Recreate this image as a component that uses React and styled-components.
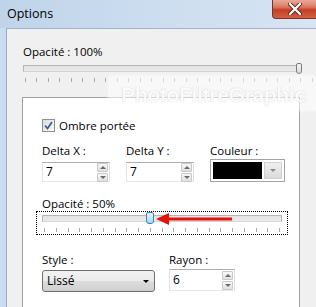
import React from 'react';
import styled, { createGlobalStyle } from 'styled-components';

const GlobalStyle = createGlobalStyle`
  html, body {
    margin: 0;
    padding: 0;
  }
  body {
    font-family: "Open Sans", "Noto Sans", "Liberation Sans", sans-serif;
    font-size: 11.5px;
    color: #000;
  }
`;

// Window chrome
const Window = styled.div`
  position: relative;
  width: 316px;
  height: 307px;
  overflow: hidden;
  display: flex;
  flex-direction: column;
  background: #cadcef;
`;

const TitleBar = styled.div`
  height: 28px;
  display: flex;
  align-items: flex-start;
  padding-left: 7px;
  background: linear-gradient(to right, #bfd4ea 0%, #cfdff0 60%, #d6e4f3 100%);
`;

const Title = styled.span`
  margin-top: 6px;
  line-height: 16px;
  font-size: 12.5px;
`;

const CloseButton = styled.div`
  margin-left: auto;
  width: 44px;
  height: 18px;
  margin-right: -1px;
  border: 1px solid #7d3324;
  border-top: none;
  border-right: none;
  border-bottom-left-radius: 4px;
  background: linear-gradient(to bottom, #e9a99c 0%, #d9785f 40%, #c23f24 55%, #d35e43 100%);
  display: flex;
  align-items: center;
  justify-content: center;
`;

const Body = styled.div`
  flex: 1;
  display: flex;
`;

const FrameSide = styled.div`
  width: 6px;
  background: #cadcef;
  border-right: 1px solid #98abc2;
`;

const Client = styled.div`
  flex: 1;
  background: #f0f0f0;
  border-top: 1px solid #a2b3c8;
  padding: 15px 0 0 16px;
  display: flex;
  flex-direction: column;
  position: relative;
`;

const Label = styled.div`
  line-height: 16px;
  white-space: nowrap;
  margin-top: ${p => p.$top || 0}px;
`;

// Sliders
const SliderArea = styled.div`
  position: relative;
  width: ${p => p.$width}px;
  margin-top: ${p => p.$top || 0}px;
  margin-left: ${p => p.$left || 0}px;
  padding: ${p => p.$pad || '0'};
  border: ${p => (p.$focus ? '1px dotted #000' : 'none')};
`;

const Track = styled.div`
  position: relative;
  height: 7px;
  box-sizing: border-box;
  border: 1px solid #b4b4b4;
  border-bottom-color: #d6d6d6;
  background: linear-gradient(to bottom, #e2e2e2, #ebebeb);
`;

const Thumb = styled.div`
  position: absolute;
  top: ${p => p.$top}px;
  left: ${p => p.$left}px;
  width: ${p => p.$w}px;
  height: ${p => p.$h}px;
  box-sizing: border-box;
  border: 1px solid ${p => (p.$blue ? '#3c7fb1' : '#7a7a7a')};
  border-radius: 2px 2px 3px 3px;
  background: ${p =>
    p.$blue
      ? 'linear-gradient(to bottom, #eaf6fd, #bee6fd 60%, #a7d9f5)'
      : 'linear-gradient(to bottom, #f4f4f4, #dcdcdc)'};
`;

const Ticks = styled.div`
  display: flex;
  justify-content: space-between;
  margin: ${p => p.$margin};
  height: 4px;
`;

const Tick = styled.span`
  width: 1px;
  height: 4px;
  background: #a7a7a7;
`;

// Group panel
const Panel = styled.div`
  margin-top: 15px;
  margin-left: -1px;
  width: 278px;
  flex: 1;
  box-sizing: border-box;
  background: #fff;
  border: 1px solid #a0a0a0;
  border-bottom: none;
  padding: 20px 0 0 19px;
  display: flex;
  flex-direction: column;
`;

const CheckRow = styled.div`
  display: flex;
  align-items: center;
  gap: 4px;
  height: 14px;
`;

const CheckBox = styled.div`
  width: 13px;
  height: 13px;
  box-sizing: border-box;
  border: 1px solid #8e8f8f;
  background: linear-gradient(135deg, #dcdcdc, #fbfbfb);
  display: flex;
  align-items: center;
  justify-content: center;
`;

const FieldRow = styled.div`
  display: flex;
  gap: ${p => p.$gap}px;
  margin-top: ${p => p.$top}px;
`;

const Field = styled.div`
  display: flex;
  flex-direction: column;
  width: ${p => p.$width}px;
`;

const SpinBox = styled.div`
  display: flex;
  align-items: center;
  height: ${p => p.$h}px;
  margin-top: ${p => p.$top}px;
  box-sizing: border-box;
  border: 1px solid #abadb3;
  border-left-color: #e2e3ea;
  border-right-color: #dbdfe6;
  border-bottom-color: #e3e9ef;
  background: #fff;
  padding-left: 3px;
`;

const SpinValue = styled.span`
  flex: 1;
  line-height: 16px;
  font-size: 12px;
`;

const SpinButtons = styled.div`
  display: flex;
  flex-direction: column;
  gap: 1px;
  margin-right: 1px;
`;

const SpinButton = styled.div`
  width: 9px;
  height: 7px;
  border: 1px solid #c9c9c9;
  border-radius: 1px;
  background: linear-gradient(to bottom, #f7f7f7, #e1e1e1);
  display: flex;
  align-items: center;
  justify-content: center;
`;

const Arrow = styled.span`
  width: 0;
  height: 0;
  border-left: ${p => p.$size}px solid transparent;
  border-right: ${p => p.$size}px solid transparent;
  ${p => (p.$up ? 'border-bottom' : 'border-top')}: ${p => p.$size}px solid ${p => p.$color};
`;

const ColorBox = styled.div`
  height: 23px;
  box-sizing: border-box;
  border: 1px solid #a3a3a3;
  background: #fff;
  padding: 2px;
  display: flex;
  gap: 2px;
`;

const Swatch = styled.div`
  flex: 1;
  background: #000;
`;

const DropButton = styled.div`
  width: 16px;
  background: linear-gradient(to bottom, #f0f0f0, #dadada);
  border: 1px solid #d0d0d0;
  display: flex;
  align-items: center;
  justify-content: center;
`;

const Select = styled.div`
  width: 113px;
  height: 22px;
  margin-top: 2px;
  box-sizing: border-box;
  border: 1px solid #707070;
  border-radius: 3px;
  background: linear-gradient(to bottom, #f2f2f2 0%, #ebebeb 50%, #dddddd 50%, #cfcfcf 100%);
  display: flex;
  align-items: center;
  padding: 0 5px 0 4px;
`;

const SelectText = styled.span`
  flex: 1;
  line-height: 16px;
  font-size: 12px;
`;

const RedArrow = styled.svg`
  position: absolute;
  left: 119px;
  top: 0px;
`;

const Watermark = styled.div`
  position: absolute;
  left: 102px;
  top: 47px;
  width: 208px;
  height: 34px;
  border-radius: 3px;
  background: rgba(255, 255, 255, 0.55);
  box-shadow: 0 0 4px rgba(255, 255, 255, 0.8);
  display: flex;
  align-items: center;
  padding: 4px 0 0 12px;
  box-sizing: border-box;
  font-family: "Liberation Sans", Arial, sans-serif;
  font-weight: bold;
  font-size: 21px;
  letter-spacing: -0.3px;
  color: rgba(255, 255, 255, 0.95);
  text-shadow: 0 0 1px rgba(120, 120, 120, 0.45);
  white-space: nowrap;
`;

function TickRow({ count, margin }) {
  return (
    <Ticks $margin={margin}>
      {Array.from({ length: count }).map((_, i) => (
        <Tick key={i} />
      ))}
    </Ticks>
  );
}

function Spin({ value, h = 20, top = 3 }) {
  return (
    <SpinBox $h={h} $top={top}>
      <SpinValue>{value}</SpinValue>
      <SpinButtons>
        <SpinButton>
          <Arrow $up $size={3} $color="#6b6b6b" />
        </SpinButton>
        <SpinButton>
          <Arrow $size={3} $color="#6b6b6b" />
        </SpinButton>
      </SpinButtons>
    </SpinBox>
  );
}

export default function App() {
  return (
    <>
      <GlobalStyle />
      <Window>
        <TitleBar>
          <Title>Options</Title>
          <CloseButton>
            <svg width="14" height="12" viewBox="0 0 14 12">
              <path d="M2 1 L12 11 M12 1 L2 11" stroke="#5a2018" strokeWidth="4" strokeLinecap="round" />
              <path d="M2 1 L12 11 M12 1 L2 11" stroke="#fff" strokeWidth="2.4" strokeLinecap="round" />
            </svg>
          </CloseButton>
        </TitleBar>
        <Body>
          <FrameSide />
          <Client>
            <Label>Opacité : 100%</Label>
            <SliderArea $width={277} $top={5}>
              <Track />
              <Thumb $top={-2} $left={273} $w={6} $h={11} />
            </SliderArea>
            <TickRow count={26} margin="6px 3px 0 2px" />
            <Watermark>PhotoFiltreGraphic</Watermark>

            <Panel>
              <CheckRow>
                <CheckBox>
                  <svg width="9" height="9" viewBox="0 0 9 9">
                    <path d="M1 4.5 L3.5 7.5 L8 1" fill="none" stroke="#3f5f8f" strokeWidth="1.8" />
                  </svg>
                </CheckBox>
                <span>Ombre portée</span>
              </CheckRow>

              <FieldRow $gap={16} $top={11}>
                <Field $width={68}>
                  <Label>Delta X :</Label>
                  <Spin value="7" />
                </Field>
                <Field $width={68}>
                  <Label>Delta Y :</Label>
                  <Spin value="7" />
                </Field>
                <Field $width={75}>
                  <Label>Couleur :</Label>
                  <ColorBox>
                    <Swatch />
                    <DropButton>
                      <Arrow $size={3} $color="#8a8a8a" />
                    </DropButton>
                  </ColorBox>
                </Field>
              </FieldRow>

              <Label $top={14}>Opacité : 50%</Label>
              <SliderArea $width={240} $top={-1} $left={-6} $pad="3px 5px 2px 5px" $focus>
                <Track />
                <Thumb $blue $top={0} $left={109} $w={8} $h={12} />
                <TickRow count={21} margin="6px 2px 0 2px" />
                <RedArrow width="80" height="14" viewBox="0 0 80 14">
                  <polygon points="0,7 13,1 13,13" fill="#e3120b" />
                  <rect x="12" y="5.5" width="64" height="3" fill="#e3120b" />
                </RedArrow>
              </SliderArea>

              <FieldRow $gap={14} $top={17}>
                <Field $width={113}>
                  <Label>Style :</Label>
                  <Select>
                    <SelectText>Lissé</SelectText>
                    <Arrow $size={3.5} $color="#000" />
                  </Select>
                </Field>
                <Field $width={66}>
                  <Label>Rayon :</Label>
                  <Spin value="6" h={22} top={1} />
                </Field>
              </FieldRow>
            </Panel>
          </Client>
        </Body>
      </Window>
    </>
  );
}
